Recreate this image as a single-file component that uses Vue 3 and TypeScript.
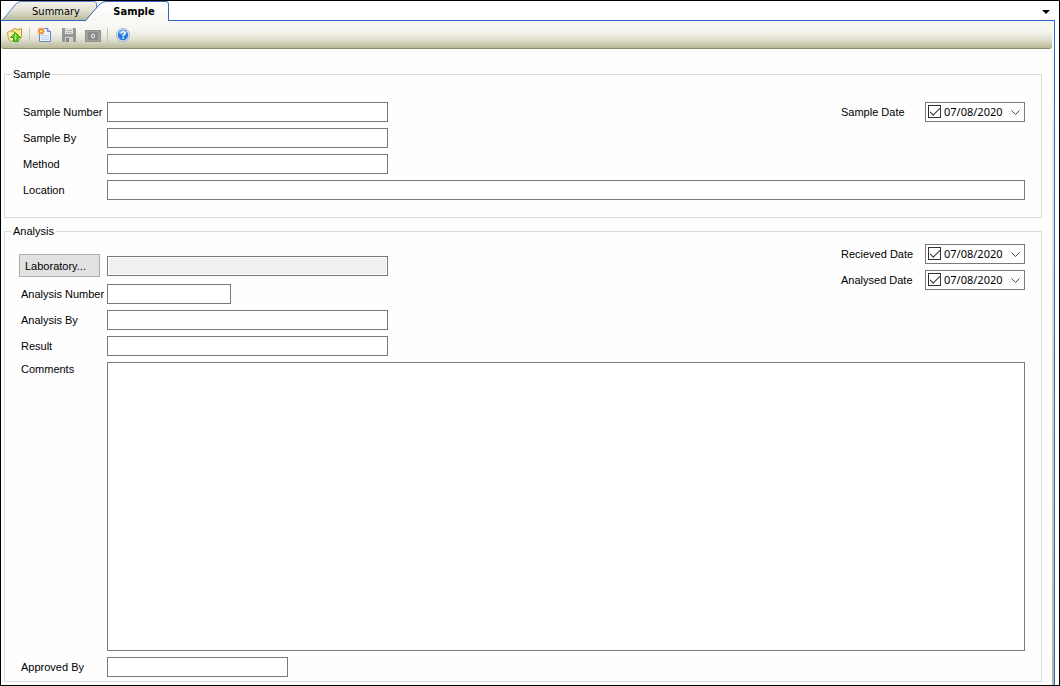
<script setup lang="ts">
import { reactive, ref } from 'vue'

interface DateField {
  id: string
  label: string
  checked: boolean
  value: string
}

const activeTab = ref<'summary' | 'sample'>('sample')

const sampleFields = reactive([
  { id: 'sample-number', label: 'Sample Number', value: '' },
  { id: 'sample-by', label: 'Sample By', value: '' },
  { id: 'method', label: 'Method', value: '' },
])

const analysisFields = reactive([
  { id: 'analysis-number', label: 'Analysis Number', value: '', short: true },
  { id: 'analysis-by', label: 'Analysis By', value: '', short: false },
  { id: 'result', label: 'Result', value: '', short: false },
])

const dateGroups = reactive<{ sample: DateField[]; analysis: DateField[] }>({
  sample: [{ id: 'sample-date', label: 'Sample Date', checked: true, value: '07/08/2020' }],
  analysis: [
    { id: 'received-date', label: 'Recieved Date', checked: true, value: '07/08/2020' },
    { id: 'analysed-date', label: 'Analysed Date', checked: true, value: '07/08/2020' },
  ],
})

const location = ref('')
const laboratory = ref('')
const comments = ref('')
const approvedBy = ref('')
</script>

<template>
  <div class="window">
    <header class="tabs">
      <svg class="tab-shapes" width="170" height="20" viewBox="0 0 170 20" aria-hidden="true">
        <defs>
          <linearGradient id="tabBack" x1="0" y1="0" x2="0" y2="1">
            <stop offset="0" stop-color="#f5f4ee" />
            <stop offset="0.45" stop-color="#e2e1d4" />
            <stop offset="1" stop-color="#b9b996" />
          </linearGradient>
          <linearGradient id="tabFront" x1="0" y1="0" x2="0" y2="1">
            <stop offset="0" stop-color="#ffffff" />
            <stop offset="1" stop-color="#f8f7f3" />
          </linearGradient>
        </defs>
        <path d="M1 19.5 L14 4 Q16.5 .5 20 .5 H93 Q95.5 .5 95.5 3 V10 L86 19.5 Z" fill="url(#tabBack)" />
        <path d="M1 19.5 L14 4 Q16.5 .5 20 .5 H93 Q95.5 .5 95.5 3 V8" fill="none" stroke="#5386cc" />
        <path d="M0 19.5 H85" stroke="#316ac5" />
        <path d="M85 20 L98 4 Q101 .5 105 .5 H165 Q167.5 .5 167.5 3 V20 Z" fill="url(#tabFront)" />
        <path d="M84.5 19.5 L98 4 Q101 .5 105 .5 H165 Q167.5 .5 167.5 3 V20" fill="none" stroke="#316ac5" />
      </svg>
      <button type="button" class="tab tab-summary" @click="activeTab = 'summary'">Summary</button>
      <button type="button" class="tab tab-sample" :aria-current="activeTab === 'sample'" @click="activeTab = 'sample'">Sample</button>
      <div class="tab-rule">
        <button type="button" class="tab-menu" aria-label="Tab list">
          <svg width="8" height="4" viewBox="0 0 8 4"><path d="M0 0H8L4 4Z" fill="#000" /></svg>
        </button>
      </div>
    </header>

    <div class="body">
      <div class="content">
        <div class="toolbar" role="toolbar" aria-label="Sample tools">
          <button type="button" class="tool" aria-label="Open parent folder">
            <svg width="16" height="16" viewBox="0 0 16 16">
              <path d="M5.5 5V2.5L9 1.5L10 3L14.5 1.5V10L12 13.5H7Z" fill="#fbe9a0" stroke="#c79a2c" />
              <path d="M.5 5.5L4.5 3.5L5.5 5H8V13L3.5 14.5L1.5 12Z" fill="#fdf0b4" stroke="#c79a2c" />
              <path d="M8.5 5.5L13.5 10.5H11V14.5H6.5V10.5H3.5Z" fill="#5fce2c" stroke="#319c17" />
              <path d="M8.5 7.5V13" stroke="#a5ec6c" />
            </svg>
          </button>
          <span class="separator"></span>
          <button type="button" class="tool" aria-label="New">
            <svg width="16" height="16" viewBox="0 0 16 16">
              <path d="M2.5 1.5H10.5L13.5 4.5V14.5H2.5Z" fill="#eaf2ff" stroke="#6587bd" />
              <path d="M10.5 1.5V4.5H13.5" fill="#c5d8f5" stroke="#6587bd" />
              <path d="M4 8.5H12M4 10.5H12M4 12.5H12" stroke="#c2d3ef" />
              <path d="M4 0L5.2 1.5L7.5 1L7 3L8.5 4L7 5.2L7.5 7.5L5.2 7L4 8L3 7L.7 7.5L1 5.2L0 4L1 3L.7 1L3 1.5Z" fill="#f9b98a" />
              <circle cx="4.2" cy="4.2" r="2.5" fill="#f37829" />
              <circle cx="4.2" cy="4.2" r="1.3" fill="#ffe65d" />
            </svg>
          </button>
          <button type="button" class="tool" aria-label="Save" disabled>
            <svg width="16" height="16" viewBox="0 0 16 16">
              <path d="M1 1H14L15 2V15H2L1 14Z" fill="#959595" />
              <path d="M4 1H12V7H4Z" fill="#e1e1df" />
              <path d="M5 3.5H11M5 5.5H11" stroke="#b6b6b4" />
              <path d="M4 10H12V15H4Z" fill="#d0d0ce" />
              <path d="M5 11H8V15H5Z" fill="#858585" />
            </svg>
          </button>
          <button type="button" class="tool" aria-label="Audit" disabled>
            <svg width="16" height="16" viewBox="0 0 16 16">
              <path d="M0 3H16V15H0Z" fill="#a0a0a0" />
              <path d="M.5 3.5H15.5V14.5H.5Z" fill="none" stroke="#909090" />
              <path d="M3 5H13V13H3Z" fill="#8a8a8a" />
              <ellipse cx="8" cy="9" rx="1.5" ry="2" fill="none" stroke="#eeeeec" />
            </svg>
          </button>
          <span class="separator"></span>
          <button type="button" class="tool" aria-label="Help">
            <svg width="16" height="16" viewBox="0 0 16 16">
              <circle cx="8" cy="8" r="6.5" fill="#e9f0f8" stroke="#9ab2d0" />
              <circle cx="8" cy="8" r="5.2" fill="#2a7bdb" />
              <path d="M3.5 6.5A4.6 4.6 0 0 1 12.5 6.5Q8 8.5 3.5 6.5Z" fill="#5f9fe8" />
              <path d="M6 6.5Q6 4.7 8 4.7Q10 4.7 10 6.3Q10 7.5 8.2 8.3V9.3" fill="none" stroke="#fff" stroke-width="1.5" />
              <path d="M7.4 10.3H9V11.8H7.4Z" fill="#fff" />
            </svg>
          </button>
        </div>

        <form class="form" @submit.prevent>
          <fieldset class="group group-sample">
            <legend>Sample</legend>
            <div class="columns">
              <div class="stack">
                <div v-for="f in sampleFields" :key="f.id" class="row">
                  <label class="caption caption-inset" :for="f.id">{{ f.label }}</label>
                  <input :id="f.id" v-model="f.value" class="box box-medium" type="text" />
                </div>
              </div>
              <div class="stack">
                <div v-for="d in dateGroups.sample" :key="d.id" class="row">
                  <label class="date-caption" :for="d.id">{{ d.label }}</label>
                  <div class="date">
                    <input v-model="d.checked" class="tick" type="checkbox" :aria-label="d.label + ' set'" />
                    <input :id="d.id" v-model="d.value" class="date-text" type="text" />
                    <button type="button" class="drop" :aria-label="'Choose ' + d.label">
                      <svg width="9" height="5" viewBox="0 0 9 5"><path d="M.5 .5L4.5 4.5L8.5 .5" fill="none" stroke="#444" /></svg>
                    </button>
                  </div>
                </div>
              </div>
            </div>
            <div class="row">
              <label class="caption caption-inset" for="location">Location</label>
              <input id="location" v-model="location" class="box box-wide" type="text" />
            </div>
          </fieldset>

          <fieldset class="group group-analysis">
            <legend>Analysis</legend>
            <div class="columns">
              <div class="stack stack-lower">
                <div class="row row-laboratory">
                  <button type="button" class="laboratory">Laboratory...</button>
                  <input v-model="laboratory" class="box box-medium box-locked" type="text" aria-label="Laboratory" readonly />
                </div>
                <div v-for="f in analysisFields" :key="f.id" class="row">
                  <label class="caption" :for="f.id">{{ f.label }}</label>
                  <input :id="f.id" v-model="f.value" class="box" :class="f.short ? 'box-short' : 'box-medium'" type="text" />
                </div>
              </div>
              <div class="stack">
                <div v-for="d in dateGroups.analysis" :key="d.id" class="row">
                  <label class="date-caption" :for="d.id">{{ d.label }}</label>
                  <div class="date">
                    <input v-model="d.checked" class="tick" type="checkbox" :aria-label="d.label + ' set'" />
                    <input :id="d.id" v-model="d.value" class="date-text" type="text" />
                    <button type="button" class="drop" :aria-label="'Choose ' + d.label">
                      <svg width="9" height="5" viewBox="0 0 9 5"><path d="M.5 .5L4.5 4.5L8.5 .5" fill="none" stroke="#444" /></svg>
                    </button>
                  </div>
                </div>
              </div>
            </div>
            <div class="row row-comments">
              <label class="caption" for="comments">Comments</label>
              <textarea id="comments" v-model="comments" class="box box-wide box-comments"></textarea>
            </div>
            <div class="row">
              <label class="caption" for="approved-by">Approved By</label>
              <input id="approved-by" v-model="approvedBy" class="box box-approved" type="text" />
            </div>
          </fieldset>
        </form>
      </div>
      <div class="edge"></div>
    </div>
  </div>
</template>

<style>
body {
  margin: 0;
}
</style>

<style scoped>
.window,
.window * {
  box-sizing: border-box;
}

.window {
  display: flex;
  flex-direction: column;
  min-height: 100vh;
  border: 1px solid #000;
  background: #fff;
  color: #000;
  font-family: "Liberation Sans", Arial, sans-serif;
  font-size: 11px;
  line-height: 14px;
}

button,
input,
textarea {
  margin: 0;
  padding: 0;
  border: 0;
  border-radius: 0;
  background: none;
  color: inherit;
  font: inherit;
}

svg {
  display: block;
}

/* Tab strip */
.tabs {
  position: relative;
  display: flex;
  height: 20px;
}

.tab-shapes {
  position: absolute;
  left: 0;
  top: 0;
}

.tab {
  position: relative;
  height: 20px;
  padding-top: 2px;
  font-family: "DejaVu Sans Condensed", "DejaVu Sans", sans-serif;
  white-space: nowrap;
}

.tab-summary {
  width: 86px;
  padding-left: 24px;
}

.tab-sample {
  width: 82px;
  padding-left: 12px;
  font-weight: bold;
}

.tab-rule {
  display: flex;
  flex: 1;
  justify-content: flex-end;
  margin-right: 4px;
  border-bottom: 1px solid #316ac5;
}

.tab-menu {
  width: 8px;
  height: 20px;
  margin-right: 5px;
  padding-top: 2px;
}

/* Page */
.body {
  display: flex;
  flex: 1;
  margin-right: 4px;
  border-right: 1px solid #316ac5;
}

.content {
  display: flex;
  flex: 1;
  flex-direction: column;
  background: #fefefe;
}

.edge {
  width: 2px;
  background: linear-gradient(#fbfaf7, #b5b594);
}

.toolbar {
  display: flex;
  align-items: center;
  height: 28px;
  padding: 0 6px;
  border-bottom: 1px solid #8c8c64;
  border-radius: 0 0 3px 3px;
  background: linear-gradient(#faf9f6 0%, #f4f3ec 40%, #e4e3d6 65%, #b9b998 100%);
}

.tool {
  width: 16px;
  height: 16px;
  margin-right: 8px;
}

.separator {
  width: 1px;
  height: 14px;
  margin: 0 7px 0 -2px;
  background: #c5c2b8;
}

.form {
  display: flex;
  flex: 1;
  flex-direction: column;
  gap: 7px;
  padding: 19px 10px 3px 3px;
}

/* Group boxes */
.group {
  min-width: 0;
  margin: 0;
  border: 1px solid #dcdcdc;
}

.group-sample {
  padding: 21px 16px 17px 14px;
}

.group-analysis {
  display: flex;
  flex: 1;
  flex-direction: column;
  padding: 6px 16px 4px 14px;
}

legend {
  margin-left: -8px;
  padding: 0 2px;
  line-height: 13px;
}

.columns {
  display: flex;
  justify-content: space-between;
  margin-bottom: 6px;
}

.stack {
  display: flex;
  flex-direction: column;
  gap: 6px;
}

.stack-lower {
  padding-top: 10px;
}

.row {
  display: flex;
  align-items: center;
}

.row-laboratory {
  height: 24px;
}

.row-comments {
  flex: 1;
  align-items: stretch;
  margin-bottom: 6px;
}

.caption {
  flex: none;
  width: 88px;
  padding-left: 2px;
  white-space: nowrap;
}

.caption-inset {
  padding-left: 4px;
}

.date-caption {
  width: 84px;
}

.box {
  height: 20px;
  padding: 0 3px;
  border: 1px solid #7a7a7a;
  background: #fff;
}

.box-short {
  width: 124px;
}

.box-approved {
  width: 181px;
}

.box-medium {
  width: 281px;
}

.box-wide {
  flex: 1;
  min-width: 0;
}

.box-locked {
  background: #f0f0f0;
  box-shadow: inset 0 0 0 1px #fff;
}

.box-comments {
  height: auto;
  resize: none;
}

.laboratory {
  align-self: flex-start;
  width: 81px;
  height: 23px;
  margin-right: 7px;
  padding-left: 5px;
  border: 1px solid #adadad;
  background: #e1e1e1;
  text-align: left;
}

/* Date picker */
.date {
  display: flex;
  align-items: flex-start;
  width: 100px;
  height: 20px;
  padding: 2px 4px 0 2px;
  border: 1px solid #7a7a7a;
  background: #fff;
  font-family: "Noto Sans", "Open Sans", sans-serif;
}

.tick {
  flex: none;
  width: 13px;
  height: 13px;
  border: 1px solid #333;
  background: #fff;
  appearance: none;
}

.tick:checked::before {
  display: block;
  width: 9px;
  height: 4px;
  margin: 2px 0 0 1px;
  border-bottom: 1px solid #333;
  border-left: 1px solid #333;
  content: "";
  transform: rotate(-45deg);
}

.date-text {
  flex: 1;
  min-width: 0;
  height: 14px;
  padding-left: 3px;
}

.drop {
  flex: none;
  width: 9px;
  height: 5px;
  margin-top: 5px;
}
</style>
